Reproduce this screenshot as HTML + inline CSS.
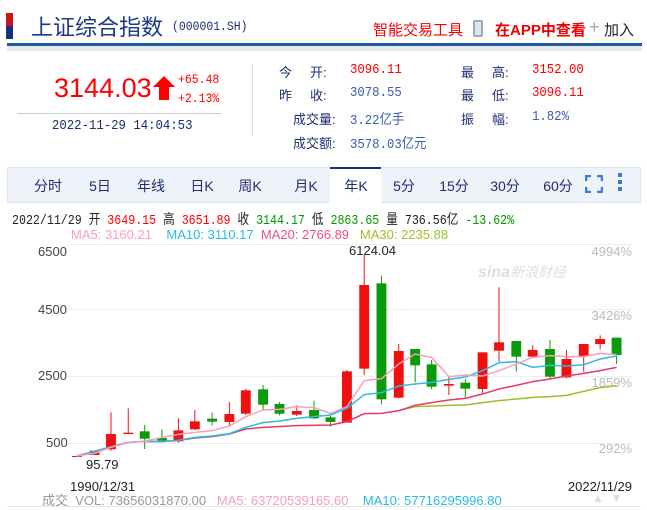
<!DOCTYPE html>
<html><head><meta charset="utf-8"><style>
*{margin:0;padding:0;box-sizing:border-box}
body{width:647px;height:509px;background:#fff;position:relative;overflow:hidden;font-family:"Liberation Sans","Noto Sans CJK SC",sans-serif}
.a{position:absolute;white-space:nowrap}
.m{font-family:"Liberation Mono","Noto Sans CJK SC",monospace;transform:scaleX(0.88);transform-origin:0 0}
.r{color:#f00}.n{color:#1c2f6e}.b{color:#3c5da8}
.tab{position:absolute;top:176px;font-size:14px;color:#1c2f6e;transform:translateX(-50%)}
</style></head><body>
<div class="a" style="left:6px;top:13px;width:7px;height:13px;background:#c8161d"></div>
<div class="a" style="left:6px;top:26px;width:7px;height:13px;background:#1c2f7a"></div>
<div class="a n" style="left:31px;top:10px;font-size:22px;color:#1c3a82">上证综合指数</div>
<div class="a m n" style="left:172px;top:19px;font-size:13px">(000001.SH)</div>
<div class="a r" style="left:373px;top:19px;font-size:15px;color:#e00">智能交易工具</div>
<div class="a" style="left:473px;top:20px;width:10px;height:17px;border:2px solid #9aa8bb;border-radius:2px;background:#dfe5ee"></div>
<div class="a" style="left:495px;top:19px;font-size:15px;font-weight:bold;color:#e00">在APP中查看</div>
<div class="a" style="left:589px;top:17px;font-size:18px;color:#9aa8bb">+</div>
<div class="a" style="left:604px;top:19px;font-size:15px;color:#222">加入</div>
<div class="a" style="left:7px;top:43px;width:635px;height:3px;background:#1f5aa0"></div>
<div class="a" style="left:7px;top:46px;width:635px;height:5px;background:#e6ebf2"></div>

<div class="a r" style="left:54px;top:73px;font-size:27px;color:#f00">3144.03</div>
<svg class="a" style="left:153px;top:76px" width="22" height="24"><polygon points="11,0 22,11 16,11 16,24 6,24 6,11 0,11" fill="#f00"/></svg>
<div class="a m r" style="left:178px;top:72px;font-size:13px">+65.48</div>
<div class="a m r" style="left:178px;top:91px;font-size:13px">+2.13%</div>
<div class="a" style="left:17px;top:113px;width:204px;height:1px;background:#ccc"></div>
<div class="a m n" style="left:52px;top:118px;font-size:14px">2022-11-29 14:04:53</div>
<div class="a" style="left:252px;top:64px;width:1px;height:72px;background:#ddd"></div>

<div class="a n" style="left:279px;top:62px;font-size:13px">今&nbsp;&nbsp;&nbsp;&nbsp;&nbsp;开:</div>
<div class="a m r" style="left:350px;top:62px;font-size:14px">3096.11</div>
<div class="a n" style="left:279px;top:85px;font-size:13px">昨&nbsp;&nbsp;&nbsp;&nbsp;&nbsp;收:</div>
<div class="a m b" style="left:350px;top:85px;font-size:14px">3078.55</div>
<div class="a n" style="left:293px;top:109px;font-size:13px">成交量:</div>
<div class="a m b" style="left:350px;top:109px;font-size:14px">3.22亿手</div>
<div class="a n" style="left:293px;top:133px;font-size:13px">成交额:</div>
<div class="a m b" style="left:350px;top:133px;font-size:14px">3578.03亿元</div>
<div class="a n" style="left:461px;top:62px;font-size:13px">最&nbsp;&nbsp;&nbsp;&nbsp;&nbsp;高:</div>
<div class="a m r" style="left:532px;top:62px;font-size:14px">3152.00</div>
<div class="a n" style="left:461px;top:85px;font-size:13px">最&nbsp;&nbsp;&nbsp;&nbsp;&nbsp;低:</div>
<div class="a m r" style="left:532px;top:85px;font-size:14px">3096.11</div>
<div class="a n" style="left:461px;top:109px;font-size:13px">振&nbsp;&nbsp;&nbsp;&nbsp;&nbsp;幅:</div>
<div class="a m b" style="left:532px;top:109px;font-size:14px">1.82%</div>

<div class="a" style="left:7px;top:167px;width:634px;height:36px;background:#eef3fa;border:1px solid #dde5f0"></div>
<div class="a" style="left:330px;top:167px;width:51px;height:37px;background:#fff;border-top:2px solid #1c2f7a"></div>
<div class="tab" style="left:48px">分时</div><div class="tab" style="left:100px">5日</div><div class="tab" style="left:151px">年线</div>
<div class="tab" style="left:202px">日K</div><div class="tab" style="left:250px">周K</div><div class="tab" style="left:306px">月K</div>
<div class="tab" style="left:356px">年K</div><div class="tab" style="left:404px">5分</div><div class="tab" style="left:454px">15分</div>
<div class="tab" style="left:505px">30分</div><div class="tab" style="left:558px">60分</div>
<svg class="a" style="left:585px;top:175px" width="18" height="18" fill="none" stroke="#3a7bd5" stroke-width="2.5"><path d="M1 6V1h5M12 1h5v5M17 12v5h-5M6 17H1v-5"/></svg>
<div class="a" style="left:618px;top:173px;width:4px;height:4px;background:#3a7bd5;box-shadow:0 7px #3a7bd5,0 14px #3a7bd5"></div>

<div class="a m" style="left:12px;top:209px;font-size:14px;color:#222;transform:scaleX(0.83)">2022/11/29 开 <span class="r">3649.15</span> 高 <span class="r">3651.89</span> 收 <span style="color:#090">3144.17</span> 低 <span style="color:#090">2863.65</span> 量 736.56亿 <span style="color:#090">-13.62%</span></div>
<div class="a" style="left:71px;top:227px;font-size:13px"><span style="color:#f6a0b8">MA5: 3160.21</span>&nbsp;&nbsp;&nbsp; <span style="color:#2bbbe0">MA10: 3110.17</span>&nbsp; <span style="color:#f0507a">MA20: 2766.89</span>&nbsp;&nbsp; <span style="color:#9ac02a">MA30: 2235.88</span></div>

<div class="a" style="left:68px;top:244px;width:564px;height:1px;background:#eee"></div>
<div class="a" style="left:68px;top:309px;width:564px;height:1px;background:#eee"></div>
<div class="a" style="left:68px;top:376px;width:564px;height:1px;background:#eee"></div>
<div class="a" style="left:68px;top:443px;width:564px;height:1px;background:#eee"></div>
<div class="a" style="left:38px;top:244px;font-size:13px;color:#444">6500</div>
<div class="a" style="left:38px;top:302px;font-size:13px;color:#444">4500</div>
<div class="a" style="left:38px;top:368px;font-size:13px;color:#444">2500</div>
<div class="a" style="left:46px;top:435px;font-size:13px;color:#444">500</div>
<div class="a" style="right:15px;top:244px;font-size:13px;color:#bbb">4994%</div>
<div class="a" style="right:15px;top:308px;font-size:13px;color:#bbb">3426%</div>
<div class="a" style="right:15px;top:375px;font-size:13px;color:#bbb">1859%</div>
<div class="a" style="right:15px;top:441px;font-size:13px;color:#bbb">292%</div>
<div class="a" style="left:478px;top:262px;font-size:16px;font-style:italic;font-weight:bold;color:#ddd">sina<span style="font-weight:normal;font-size:14px">新浪财经</span></div>

<svg class="a" style="left:0;top:240px" width="647" height="270" viewBox="-2 0 1574 810" preserveAspectRatio="none">
<g id="c"></g>
<g fill="none" stroke-width="1.5">
<polyline vector-effect="non-scaling-stroke" stroke="#9ac02a" points="968,512 1008,500 1090,496 1130,495 1172,488 1212,482 1254,477 1294,472 1336,470 1376,466 1418,454 1458,443 1498,437"/>
<polyline vector-effect="non-scaling-stroke" stroke="#e83a6a" points="185,648 310,607 350,604 392,605 432,601 472,594 514,590 556,582 596,567 638,562 720,557 802,555 842,545 884,521 926,520 968,512 1008,496 1048,488 1090,480 1130,475 1172,462 1212,447 1254,436 1294,425 1336,417 1376,408 1418,400 1458,392 1498,382"/>
<polyline vector-effect="non-scaling-stroke" stroke="#2bbbe0" points="185,648 310,607 350,604 392,605 432,601 472,592 514,588 556,581 596,562 638,548 678,543 720,535 762,530 802,525 842,505 884,464 926,458 968,438 1008,432 1048,427 1090,418 1130,411 1172,392 1212,368 1254,365 1294,382 1336,376 1376,378 1418,374 1458,357 1498,348"/>
<polyline vector-effect="non-scaling-stroke" stroke="#f6a0b8" points="185,648 228,640 268,622 310,608 350,604 392,592 432,583 472,577 514,572 556,558 596,530 638,510 678,508 720,500 762,503 802,520 842,500 884,422 926,416 968,372 1008,342 1048,352 1090,410 1130,405 1172,408 1212,392 1254,372 1294,352 1336,347 1376,350 1418,350 1458,340 1498,344"/>
</g>
</svg>
<script>
var d=[[185,648,650,648,650,1],[228,632,645,632,645,1],[268,582,628,517,632,1],[310,578,582,505,583,1],[350,574,596,555,627,0],[392,594,602,568,605,0],[432,571,604,535,608,1],[472,544,568,510,570,1],[514,536,545,518,556,0],[556,522,546,486,556,1],[596,451,521,447,525,1],[638,448,494,435,510,0],[678,492,521,486,526,0],[720,513,524,496,528,1],[762,510,535,482,537,0],[802,532,546,528,560,0],[842,394,548,390,548,1],[884,135,386,45,405,1],[926,130,478,107,493,0],[968,333,473,312,475,1],[1008,327,376,327,427,0],[1048,373,440,360,447,0],[1090,432,437,412,465,1],[1130,428,446,418,473,0],[1172,337,447,337,460,1],[1212,307,332,142,365,1],[1254,303,350,303,395,0],[1294,330,350,315,352,1],[1336,327,410,300,415,0],[1376,357,412,330,415,1],[1418,312,350,312,395,1],[1458,297,312,286,328,1],[1498,293,345,293,372,0]];
var s='';d.forEach(function(e){var c=e[5]?'#f01010':'#0a9a0a';s+='<rect x="'+(e[0]-1.2)+'" y="'+e[3]+'" width="2.4" height="'+(e[4]-e[3])+'" fill="'+c+'"/><rect x="'+(e[0]-12)+'" y="'+e[1]+'" width="24" height="'+Math.max(3,e[2]-e[1])+'" fill="'+c+'"/>';});
document.getElementById('c').innerHTML=s;
</script>
<div class="a" style="left:349px;top:243px;font-size:13px;color:#222">6124.04</div>
<div class="a" style="left:86px;top:457px;font-size:13px;color:#222">95.79</div>
<div class="a" style="left:70px;top:479px;font-size:13px;color:#222">1990/12/31</div>
<div class="a" style="right:15px;top:479px;font-size:13px;color:#222">2022/11/29</div>
<div class="a" style="left:42px;top:490px;font-size:13px;color:#999">成交&nbsp; VOL: 73656031870.00&nbsp;&nbsp; <span style="color:#f6a0b8">MA5: 63720539165.60</span>&nbsp;&nbsp;&nbsp; <span style="color:#2bbbe0">MA10: 57716295996.80</span></div>
<div class="a" style="left:592px;top:491px;font-size:12px;color:#ddd">▲&nbsp;&nbsp;▼</div>
<div class="a" style="left:7px;top:506px;width:634px;height:1px;background:#e6e6e6"></div>
</body></html>
